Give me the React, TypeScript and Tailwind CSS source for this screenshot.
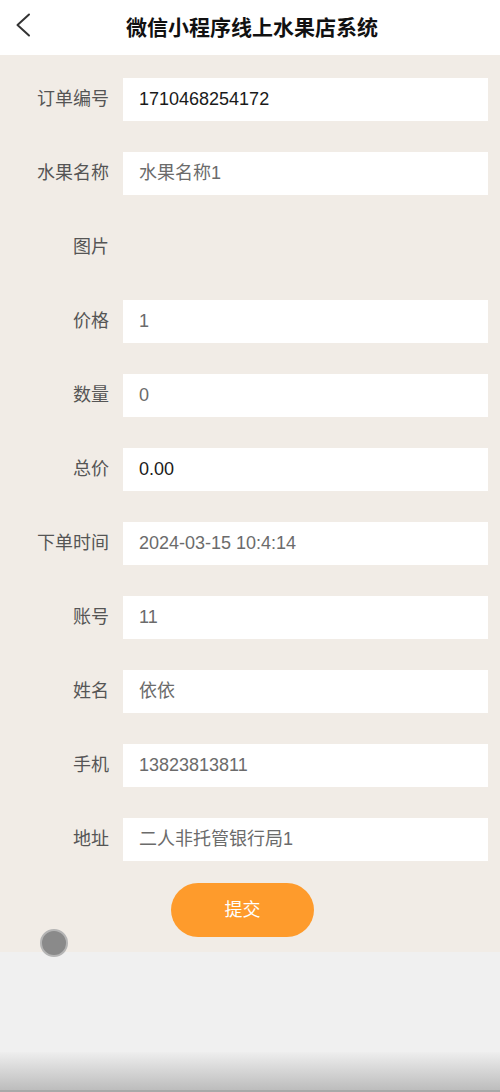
const rows = [
  { label: '订单编号', value: '1710468254172', dark: true },
  { label: '水果名称', value: '水果名称1' },
  { label: '图片', value: null },
  { label: '价格', value: '1' },
  { label: '数量', value: '0' },
  { label: '总价', value: '0.00', dark: true },
  { label: '下单时间', value: '2024-03-15 10:4:14' },
  { label: '账号', value: '11' },
  { label: '姓名', value: '依依' },
  { label: '手机', value: '13823813811' },
  { label: '地址', value: '二人非托管银行局1' },
];

export default function App() {
  return (
    <div className="w-[500px] h-[1092px] flex flex-col bg-[#f0f0f0] font-['Liberation_Sans','Noto_Sans_CJK_SC',sans-serif] overflow-hidden">
      {/* header */}
      <div className="relative h-[55px] shrink-0 bg-white flex items-center justify-center">
        <svg className="absolute left-[14px] top-[13px]" width="18" height="24" viewBox="0 0 18 24" fill="none">
          <path d="M15 1.5 L3.5 12 L15 22.5" stroke="#333" strokeWidth="2" strokeLinecap="round" strokeLinejoin="round" />
        </svg>
        <h1 className="text-[21px] font-bold text-[#111] pl-[4px]">微信小程序线上水果店系统</h1>
      </div>

      {/* form */}
      <div className="relative bg-[#f1ece6] pt-[23px] pb-[15px] flex flex-col gap-[31px]">
        {rows.map((r) => (
          <div key={r.label} className="flex items-center h-[43px]">
            <div className="w-[109px] text-right text-[18px] text-[#555]">{r.label}</div>
            {r.value !== null && (
              <div
                className={`ml-[14px] w-[365px] h-[43px] bg-white flex items-center pl-[16px] text-[18px] ${
                  r.dark ? 'text-[#1a1a1a]' : 'text-[#6b6b6b]'
                }`}
              >
                {r.value}
              </div>
            )}
          </div>
        ))}
        <div className="flex -mt-[9px] pl-[171px]">
          <button className="w-[143px] h-[54px] rounded-full bg-[#fe9b2c] text-white text-[18px]">提交</button>
        </div>
        <div className="absolute left-[40px] bottom-[-5px] w-[28px] h-[28px] rounded-full bg-[#8a8a8a] border-2 border-[#b5b5b5]" />
      </div>

      <div className="flex-1" />
      <div className="h-[40px] shrink-0 bg-gradient-to-b from-[#eeeeee] to-[#bdbdbd] border-b-2 border-[#a9a9a9]" />
    </div>
  );
}
